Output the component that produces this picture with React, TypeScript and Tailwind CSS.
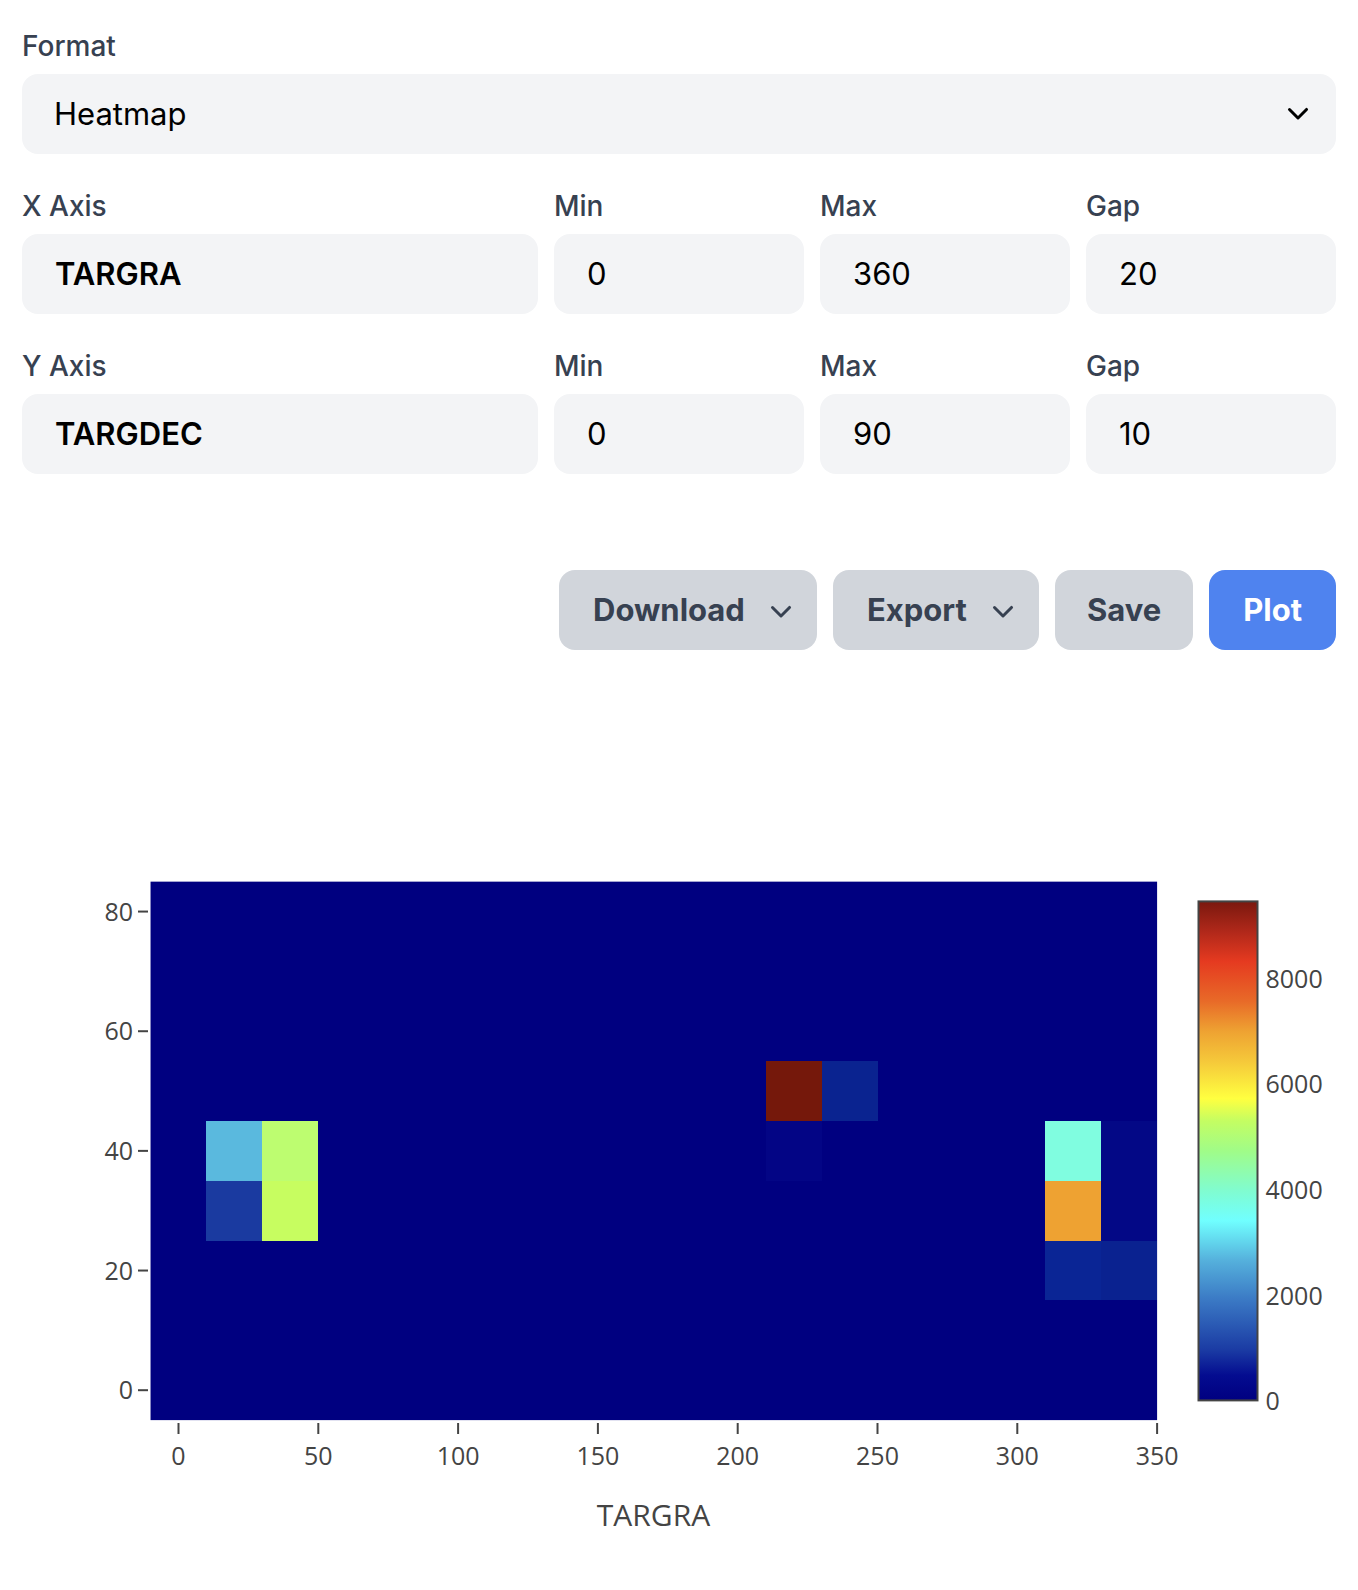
import React from "react";

const px = (x: number) => 178.5 + x * 2.796;
const py = (y: number) => 1390.2 - y * 5.983;

const cells: { x: number; y: number; c: string }[] = [
  { x: 20, y: 40, c: "#5ab9de" },
  { x: 40, y: 40, c: "#bdfd70" },
  { x: 20, y: 30, c: "#1a3aa0" },
  { x: 40, y: 30, c: "#c7fd60" },
  { x: 220, y: 50, c: "#75180b" },
  { x: 240, y: 50, c: "#0a2390" },
  { x: 220, y: 40, c: "#030585" },
  { x: 320, y: 40, c: "#80fde0" },
  { x: 320, y: 30, c: "#eea232" },
  { x: 340, y: 40, c: "#030886" },
  { x: 340, y: 30, c: "#030886" },
  { x: 320, y: 20, c: "#0a2595" },
  { x: 340, y: 20, c: "#0a2290" },
];

const stops: [number, string][] = [
  [0, "#000080"],
  [0.05, "#040c90"],
  [0.1, "#1a3aa3"],
  [0.2, "#3a78c4"],
  [0.28, "#55b0dc"],
  [0.36, "#70ffff"],
  [0.42, "#80fcd0"],
  [0.5, "#a0fc88"],
  [0.56, "#c4fd62"],
  [0.605, "#ffff40"],
  [0.68, "#f5c83a"],
  [0.74, "#eea232"],
  [0.8, "#e86a28"],
  [0.88, "#e53a20"],
  [0.94, "#b0281a"],
  [1, "#7a180e"],
];

function Chevron({ className }: { className?: string }) {
  return (
    <svg className={className} viewBox="0 0 20 20" fill="currentColor">
      <path
        fillRule="evenodd"
        d="M5.22 8.22a.75.75 0 0 1 1.06 0L10 11.94l3.72-3.72a.75.75 0 1 1 1.06 1.06l-4.25 4.25a.75.75 0 0 1-1.06 0L5.22 9.28a.75.75 0 0 1 0-1.06Z"
        clipRule="evenodd"
      />
    </svg>
  );
}

function Field({
  label,
  value,
  bold,
  span,
}: {
  label: string;
  value: string;
  bold?: boolean;
  span?: boolean;
}) {
  return (
    <div className={span ? "col-span-2 flex flex-col" : "flex flex-col"}>
      <div className="text-[28px] leading-[40px] font-medium text-[#374151]">{label}</div>
      <div className="mt-2 h-[80px] rounded-[16px] bg-[#f3f4f6] flex items-center pl-[33px]">
        <span
          className={
            bold
              ? "text-[31px] font-semibold text-black"
              : "text-[31px] font-normal text-black"
          }
        >
          {value}
        </span>
      </div>
    </div>
  );
}

function Chart() {
  const xt = [0, 50, 100, 150, 200, 250, 300, 350];
  const yt = [0, 20, 40, 60, 80];
  const cb = [0, 2000, 4000, 6000, 8000];
  const cby = (v: number) => 1401.3 - (v / 2000) * 105.7;
  const font = "'Open Sans', 'DejaVu Sans', sans-serif";
  return (
    <svg width={1358} height={940} viewBox="0 650 1358 940" className="block">
      <defs>
        <linearGradient id="jet" x1="0" y1="1" x2="0" y2="0">
          {stops.map(([o, c]) => (
            <stop key={o} offset={o} stopColor={c} />
          ))}
        </linearGradient>
      </defs>
      <rect
        x={px(-10)}
        y={py(85)}
        width={px(350) - px(-10)}
        height={py(-5) - py(85)}
        fill="#000080"
      />
      {cells.map((c, i) => (
        <rect
          key={i}
          x={px(c.x - 10)}
          y={py(c.y + 5)}
          width={px(20) - px(0)}
          height={py(0) - py(10)}
          fill={c.c}
          shapeRendering="crispEdges"
        />
      ))}
      {yt.map((v) => (
        <g key={v}>
          <line x1={138} x2={148} y1={py(v)} y2={py(v)} stroke="#444" strokeWidth={2} />
          <text
            x={133}
            y={py(v) + 9}
            textAnchor="end"
            fontSize={25}
            fill="#444"
            fontFamily={font}
          >
            {v}
          </text>
        </g>
      ))}
      {xt.map((v) => (
        <g key={v}>
          <line x1={px(v)} x2={px(v)} y1={1423} y2={1434} stroke="#444" strokeWidth={2} />
          <text
            x={px(v)}
            y={1465}
            textAnchor="middle"
            fontSize={25}
            fill="#444"
            fontFamily={font}
          >
            {v}
          </text>
        </g>
      ))}
      <text x={653.5} y={1526} textAnchor="middle" fontSize={30} fill="#444" fontFamily={font}>
        TARGRA
      </text>
      <rect
        x={1198.5}
        y={901.4}
        width={59}
        height={499}
        fill="url(#jet)"
        stroke="#444"
        strokeWidth={2}
      />
      {cb.map((v) => (
        <text key={v} x={1265.5} y={cby(v) + 9} fontSize={25} fill="#444" fontFamily={font}>
          {v}
        </text>
      ))}
    </svg>
  );
}

export default function App() {
  return (
    <div className="w-[1358px] min-h-[1590px] bg-white font-['Inter','Liberation_Sans',sans-serif]">
      <div className="px-[22px] pt-[26px]">
        <div className="text-[28px] leading-[40px] font-medium text-[#374151]">Format</div>
        <div className="mt-2 h-[80px] rounded-[16px] bg-[#f3f4f6] flex items-center justify-between pl-[32px] pr-[18px]">
          <span className="text-[31px] text-black">Heatmap</span>
          <Chevron className="w-[40px] h-[40px] text-black -translate-y-[2px]" />
        </div>
        <div className="mt-[32px] grid grid-cols-5 gap-x-4 gap-y-[32px]">
          <Field label="X Axis" value="TARGRA" bold span />
          <Field label="Min" value="0" />
          <Field label="Max" value="360" />
          <Field label="Gap" value="20" />
          <Field label="Y Axis" value="TARGDEC" bold span />
          <Field label="Min" value="0" />
          <Field label="Max" value="90" />
          <Field label="Gap" value="10" />
        </div>
        <div className="mt-[96px] flex justify-end gap-4">
          <button className="h-[80px] rounded-[16px] bg-[#d1d5db] pl-[34px] pr-[16px] flex items-center gap-[16px] text-[31px] font-bold text-[#374151]">
            Download
            <Chevron className="w-[40px] h-[40px] text-[#374151]" />
          </button>
          <button className="h-[80px] rounded-[16px] bg-[#d1d5db] pl-[34px] pr-[16px] flex items-center gap-[16px] text-[31px] font-bold text-[#374151]">
            Export
            <Chevron className="w-[40px] h-[40px] text-[#374151]" />
          </button>
          <button className="h-[80px] rounded-[16px] bg-[#d1d5db] px-[32px] flex items-center text-[31px] font-bold text-[#374151]">
            Save
          </button>
          <button className="h-[80px] rounded-[16px] bg-[#4f83ef] px-[34px] flex items-center text-[31px] font-bold text-white">
            Plot
          </button>
        </div>
      </div>
      <Chart />
    </div>
  );
}
